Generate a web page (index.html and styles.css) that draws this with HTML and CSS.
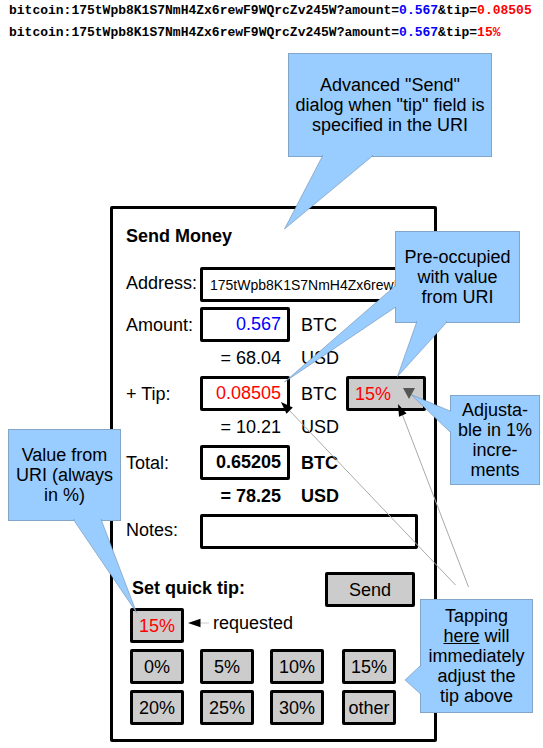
FILE: index.html
```html
<!DOCTYPE html>
<html lang="en">
<head>
<meta charset="utf-8">
<title>Send Money</title>
<link rel="stylesheet" href="styles.css">
</head>
<body>
<main class="stage">
  <header class="uris">
    <p>bitcoin:175tWpb8K1S7NmH4Zx6rewF9WQrcZv245W?amount=<span class="blue">0.567</span>&amp;tip=<span class="red">0.08505</span></p>
    <p>bitcoin:175tWpb8K1S7NmH4Zx6rewF9WQrcZv245W?amount=<span class="blue">0.567</span>&amp;tip=<span class="red">15%</span></p>
  </header>

  <form class="dialog">
    <h1>Send Money</h1>
    <div class="row row-wide row-address">
      <label for="address">Address:</label>
      <input class="box address" id="address" type="text" value="175tWpb8K1S7NmH4Zx6rewF9WQrcZv245W">
    </div>
    <div class="row">
      <label for="amount">Amount:</label>
      <input class="box number blue" id="amount" type="text" value="0.567">
      <span class="unit">BTC</span>
    </div>
    <div class="row converted">
      <span class="value">= 68.04</span>
      <span class="unit">USD</span>
    </div>
    <div class="row">
      <label for="tip">+ Tip:</label>
      <input class="box number red" id="tip" type="text" value="0.08505">
      <span class="unit">BTC</span>
      <span class="picker">
        <select class="box red" aria-label="Tip percentage"><option>15%</option></select>
      </span>
    </div>
    <div class="row converted">
      <span class="value">= 10.21</span>
      <span class="unit">USD</span>
    </div>
    <div class="row strong">
      <label for="total">Total:</label>
      <input class="box number" id="total" type="text" value="0.65205" readonly>
      <span class="unit">BTC</span>
    </div>
    <div class="row converted strong">
      <span class="value">= 78.25</span>
      <span class="unit">USD</span>
    </div>
    <div class="row row-wide">
      <label for="notes">Notes:</label>
      <input class="box" id="notes" type="text">
    </div>

    <div class="actions">
      <h2>Set quick tip:</h2>
      <button class="box send" type="button">Send</button>
    </div>
    <div class="quick">
      <div class="requested">
        <button class="box red" type="button">15%</button>
        <svg width="21" height="10" viewBox="0 0 21 10" aria-hidden="true">
          <path d="M12 5H21" stroke="#ccc"/>
          <path d="M0 5L12.500 0.700V9.300Z"/>
        </svg>
        <span>requested</span>
      </div>
      <div class="presets">
        <button class="box" type="button">0%</button>
        <button class="box" type="button">5%</button>
        <button class="box" type="button">10%</button>
        <button class="box" type="button">15%</button>
        <button class="box" type="button">20%</button>
        <button class="box" type="button">25%</button>
        <button class="box" type="button">30%</button>
        <button class="box" type="button">other</button>
      </div>
    </div>
  </form>

  <aside class="callout about">Advanced "Send" dialog when "tip" field is specified in the URI</aside>
  <aside class="callout prefilled">Pre-occupied with value from URI</aside>
  <aside class="callout adjust">Adjusta-<br>ble in 1% incre-<br>ments</aside>
  <aside class="callout percent">Value from URI (always in %)</aside>
  <aside class="callout tapping">Tapping <u>here</u> will immediately adjust the tip above</aside>

  <svg class="pointers" width="543" height="748" viewBox="0 0 543 748" aria-hidden="true">
    <g class="arrows">
      <path class="line" d="M455.500 585L289 410M468.500 587L402.500 415"/>
      <path d="M281 402L292.800 407.500L286.500 413.700Z"/>
      <path d="M398 404L406.500 413.500L399 416.800Z"/>
    </g>
    <g class="tails">
      <path d="M322.500 155V156L284.500 229L372.500 156V155"/>
      <path d="M396 286H395L284.500 382L395 307.500H396"/>
      <path d="M416.500 321V322.500L397.500 376.500L446.500 322.500V321"/>
      <path d="M451 411H450L411 394.500L450 432H451"/>
      <path d="M74 519V520.500L136.500 612.500L101.500 520.500V519"/>
      <path d="M421 666H420L405 680L420 693.500H421"/>
    </g>
  </svg>
</main>
</body>
</html>
```
FILE: styles.css
```css
* {
  box-sizing: border-box;
}

body {
  margin: 0;
  background: #fff;
  color: #000;
  font: 18px/20px "Liberation Sans", Arial, sans-serif;
}

h1,
h2,
p {
  margin: 0;
  font-size: inherit;
}

input,
select,
button {
  font: inherit;
  color: inherit;
}

.stage {
  position: relative;
  max-width: 543px;
  padding-bottom: 6px;
}

.uris {
  padding-left: 9px;
  font: bold 13px/22px "Liberation Mono", "Courier New", monospace;
  white-space: nowrap;
}

.blue {
  color: #00f;
}

.red {
  color: #f00;
}

.dialog {
  margin: 162px 106px 0 110px;
  padding: 17px 8px 14px 13px;
  border: 3px solid #000;
  border-radius: 2px;
}

.box {
  min-width: 0;
  height: 35px;
  margin: 0;
  padding: 0 6px;
  border: 3px solid #000;
  border-radius: 2px;
  background: #fff;
}

.row {
  display: grid;
  grid-template-columns: 74px 90px 45px 1fr;
  column-gap: 0;
  align-items: center;
  height: 35px;
}

.row-wide {
  grid-template-columns: 74px 1fr;
  padding-right: 8px;
}

.row-wide label {
  padding-bottom: 3px;
}

.row-address {
  margin: 21px 0 5px;
}

.address {
  padding: 0 7px;
  font-size: 14px;
}

.number {
  text-align: right;
}

.unit {
  padding-left: 11px;
}

.converted {
  height: 34px;
  padding-bottom: 2px;
}

.value {
  grid-column: 2;
  padding-right: 9px;
  text-align: right;
}

.strong .number,
.strong .value,
.strong .unit {
  font-weight: bold;
}

.picker {
  position: relative;
  width: 80px;
  justify-self: end;
}

.picker select {
  display: block;
  width: 100%;
  appearance: none;
  background: #ccc;
}

.picker::after {
  content: "";
  position: absolute;
  top: 12px;
  right: 11px;
  border: 6px solid transparent;
  border-top: 11px solid #555;
  border-bottom: 0;
  pointer-events: none;
}

.actions {
  display: flex;
  justify-content: space-between;
  height: 36px;
  margin: 23px 11px 0 6px;
}

.actions h2 {
  line-height: 32px;
}

button.box {
  width: 54px;
  padding: 0;
  background: #ccc;
  text-align: center;
}

button.send {
  width: 90px;
}

.quick {
  display: grid;
  gap: 6px;
  margin-left: 4px;
}

.requested {
  display: flex;
  gap: 4px;
}

.requested svg {
  margin-top: 10px;
}

.requested span {
  line-height: 30px;
}

.presets {
  display: grid;
  grid-template-columns: 54px 54px 56px 54px;
  gap: 6px 16px;
}

.callout {
  position: absolute;
  border: 1px solid #83a5c7;
  background: #9cf;
  text-align: center;
}

.about {
  left: 288px;
  top: 53px;
  width: 204px;
  padding: 21px 5px;
}

.prefilled {
  left: 395px;
  top: 231px;
  width: 125px;
  padding: 15px 8px;
}

.adjust {
  left: 450px;
  top: 395px;
  width: 90px;
  padding: 4px;
}

.percent {
  left: 8px;
  top: 429px;
  width: 113px;
  padding: 15px 5px;
}

.tapping {
  left: 420px;
  top: 599px;
  width: 113px;
  padding: 6px 5px;
}

.tapping u {
  text-decoration-thickness: 1px;
}

.pointers {
  position: absolute;
  left: 0;
  top: 0;
  pointer-events: none;
}

.arrows .line {
  fill: none;
  stroke: #aaa;
  stroke-width: 1;
}

.tails path {
  fill: #9cf;
  stroke: #6f8fae;
  stroke-width: 0.6;
}
```
